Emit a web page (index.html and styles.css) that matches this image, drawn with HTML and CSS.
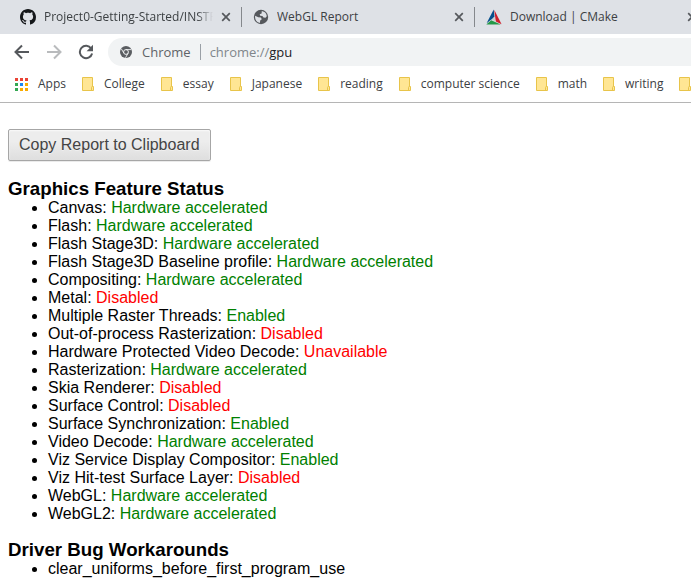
FILE: index.html
```html
<!DOCTYPE html>
<html lang="en">
<head>
<meta charset="utf-8">
<title>chrome://gpu</title>
<link rel="stylesheet" href="styles.css">
</head>
<body>
<svg class="defs" aria-hidden="true">
  <symbol id="close" viewBox="0 0 10 10"><path d="M1.2 1.2l7.6 7.6M8.8 1.2L1.2 8.8" fill="none" stroke="#55585c" stroke-width="1.7"/></symbol>
  <symbol id="folder" viewBox="0 0 12 14"><path d="M.5.5h10v9h1v4H.5z" fill="#ffe694" stroke="#e8c44a"/><path d="M9.5 13V10.5q0-1 1-1" fill="none" stroke="#e8c44a"/></symbol>
</svg>
<header class="browser">
  <div class="tabs">
    <div class="tab">
      <svg class="favicon" viewBox="0 0 16 16"><path fill="#15171a" fill-rule="evenodd" d="M8 0C3.58 0 0 3.58 0 8c0 3.54 2.29 6.53 5.47 7.59.4.07.55-.17.55-.38 0-.19-.01-.82-.01-1.49-2.01.37-2.53-.49-2.69-.94-.09-.23-.48-.94-.82-1.13-.28-.15-.68-.52-.01-.53.63-.01 1.08.58 1.23.82.72 1.21 1.87.87 2.33.66.07-.52.28-.87.51-1.07-1.78-.2-3.64-.89-3.64-3.95 0-.87.31-1.59.82-2.15-.08-.2-.36-1.02.08-2.12 0 0 .67-.21 2.2.82.64-.18 1.32-.27 2-.27s1.36.09 2 .27c1.53-1.04 2.2-.82 2.2-.82.44 1.1.16 1.92.08 2.12.51.56.82 1.27.82 2.15 0 3.07-1.87 3.75-3.65 3.95.29.25.54.73.54 1.48 0 1.07-.01 1.93-.01 2.2 0 .21.15.46.55.38A8.01 8.01 0 0 0 16 8c0-4.42-3.58-8-8-8z"/></svg>
      <span class="tab-title fade">Project0-Getting-Started/INSTRU</span>
      <button class="close" aria-label="Close tab"><svg viewBox="0 0 10 10"><use href="#close"/></svg></button>
    </div>
    <div class="tab">
      <svg class="favicon" viewBox="0 0 16 16"><circle cx="8" cy="8" r="7.2" fill="#55585c"/><path fill="#dee1e6" d="M8.8 2.1l2.6.9c1.4.9 2.2 2.4 2.4 4.2l-1.3 1.6-2-.2-1.1-1.5-2.2-.3-.5-1.5 1.9-.8zM2.1 6.8l3.2 1.4 2.6.4.9 1.6-1.6 1.4-.3 2.3c-2.9-.3-5.2-3.2-4.8-7.1z"/></svg>
      <span class="tab-title">WebGL Report</span>
      <button class="close" aria-label="Close tab"><svg viewBox="0 0 10 10"><use href="#close"/></svg></button>
    </div>
    <div class="tab">
      <svg class="favicon" viewBox="0 0 16 16"><path fill="#064f8c" d="M7.7.5L.6 14.2 8.5 8z"/><path fill="#cf1f2d" d="M8.2.8l7.4 14.4-5.8-2.6z"/><path fill="#249847" d="M.3 15.500l4.900-4.200 9.500 4.200z"/><path fill="#cdcdce" d="M8.3 7.500l1.200 4.700-3.700-1.500z"/></svg>
      <span class="tab-title">Download | CMake</span>
      <button class="close" aria-label="Close tab"><svg viewBox="0 0 10 10"><use href="#close"/></svg></button>
    </div>
  </div>
  <div class="toolbar">
    <button class="nav" aria-label="Back"><svg viewBox="0 0 16 16"><path d="M15 8H2M8 1.5L1.5 8 8 14.5" fill="none" stroke="#55585c" stroke-width="2"/></svg></button>
    <button class="nav" aria-label="Forward"><svg viewBox="0 0 16 16"><path d="M1 8h13M8 1.5L14.5 8 8 14.5" fill="none" stroke="#b9bbbd" stroke-width="2"/></svg></button>
    <button class="nav" aria-label="Reload"><svg viewBox="0 0 16 16"><path d="M13.2 4.5A6.2 6.2 0 1 0 14.1 9.5" fill="none" stroke="#55585c" stroke-width="2"/><path d="M15 .8v6.400H8.600z" fill="#55585c"/></svg></button>
    <div class="omnibox">
      <svg class="site" viewBox="0 0 12 12"><circle cx="6" cy="6" r="6" fill="#5a5d61"/><circle cx="6" cy="6" r="2.4" fill="none" stroke="#f1f3f4"/><path d="M6 3.6h5.200M3.900 7.200L1.300 2.800M8.100 7.200l-2.600 4.500" fill="none" stroke="#f1f3f4" stroke-width=".9"/></svg>
      <span class="origin">Chrome</span>
      <span class="url">chrome://<b>gpu</b></span>
    </div>
  </div>
  <nav class="bookmarks">
    <a href="#" class="apps"><svg viewBox="0 0 13 13"><path fill="#ea4335" d="M0 0h3v3H0zM5 0h3v3H5zM10 0h3v3h-3z"/><path fill="#34a853" d="M0 5h3v3H0zM0 10h3v3H0z"/><path fill="#1a87f5" d="M5 5h3v3H5z"/><path fill="#f9ab00" d="M10 5h3v3h-3zM5 10h3v3H5zM10 10h3v3h-3z"/></svg>Apps</a>
    <a href="#"><svg viewBox="0 0 12 14"><use href="#folder"/></svg>College</a>
    <a href="#"><svg viewBox="0 0 12 14"><use href="#folder"/></svg>essay</a>
    <a href="#"><svg viewBox="0 0 12 14"><use href="#folder"/></svg>Japanese</a>
    <a href="#"><svg viewBox="0 0 12 14"><use href="#folder"/></svg>reading</a>
    <a href="#"><svg viewBox="0 0 12 14"><use href="#folder"/></svg>computer science</a>
    <a href="#"><svg viewBox="0 0 12 14"><use href="#folder"/></svg>math</a>
    <a href="#"><svg viewBox="0 0 12 14"><use href="#folder"/></svg>writing</a>
    <a href="#" aria-label="More bookmarks"><svg viewBox="0 0 12 14"><use href="#folder"/></svg></a>
  </nav>
</header>
<main>
  <button class="copy">Copy Report to Clipboard</button>
  <h3>Graphics Feature Status</h3>
  <ul>
    <li>Canvas: <span class="ok">Hardware accelerated</span></li>
    <li>Flash: <span class="ok">Hardware accelerated</span></li>
    <li>Flash Stage3D: <span class="ok">Hardware accelerated</span></li>
    <li>Flash Stage3D Baseline profile: <span class="ok">Hardware accelerated</span></li>
    <li>Compositing: <span class="ok">Hardware accelerated</span></li>
    <li>Metal: <span class="off">Disabled</span></li>
    <li>Multiple Raster Threads: <span class="ok">Enabled</span></li>
    <li>Out-of-process Rasterization: <span class="off">Disabled</span></li>
    <li>Hardware Protected Video Decode: <span class="off">Unavailable</span></li>
    <li>Rasterization: <span class="ok">Hardware accelerated</span></li>
    <li>Skia Renderer: <span class="off">Disabled</span></li>
    <li>Surface Control: <span class="off">Disabled</span></li>
    <li>Surface Synchronization: <span class="ok">Enabled</span></li>
    <li>Video Decode: <span class="ok">Hardware accelerated</span></li>
    <li>Viz Service Display Compositor: <span class="ok">Enabled</span></li>
    <li>Viz Hit-test Surface Layer: <span class="off">Disabled</span></li>
    <li>WebGL: <span class="ok">Hardware accelerated</span></li>
    <li>WebGL2: <span class="ok">Hardware accelerated</span></li>
  </ul>
  <h3>Driver Bug Workarounds</h3>
  <ul>
    <li>clear_uniforms_before_first_program_use</li>
  </ul>
</main>
</body>
</html>
```
FILE: styles.css
```css
* { box-sizing: border-box; }
body {
  margin: 0;
  background: #fff;
  color: #000;
  font: 16px/18px "Liberation Sans", Arial, sans-serif;
}
svg { display: block; flex: none; }
.defs { position: absolute; width: 0; height: 0; }
.browser {
  font: 12px/16px "Open Sans", "Segoe UI", sans-serif;
  color: #3c4043;
  border-bottom: 1px solid #b5b5b5;
  overflow: hidden;
}
.browser button { border: 0; padding: 0; background: none; }

.tabs { display: flex; height: 34px; background: #dee1e6; }
.tab {
  display: flex;
  flex: none;
  align-items: center;
  width: 233px;
  padding: 0 10px 0 12px;
  position: relative;
}
.tab:first-child { width: 241px; padding-left: 20px; }
.tab + .tab::before {
  content: "";
  position: absolute;
  left: 0;
  top: 7px;
  width: 1px;
  height: 20px;
  background: #85888c;
}
.favicon { width: 16px; height: 16px; margin-right: 8px; }
.tab-title { flex: 1; min-width: 0; overflow: hidden; white-space: nowrap; }
.fade {
  -webkit-mask-image: linear-gradient(to left, transparent, #000 16px);
  mask-image: linear-gradient(to left, transparent, #000 16px);
}
.close { margin-left: 8px; }
.close svg { width: 10px; height: 10px; }

.toolbar { display: flex; align-items: center; gap: 16px; height: 36px; padding-left: 14px; }
.nav { flex: none; }
.nav svg { width: 16px; height: 16px; }
.omnibox {
  display: flex;
  flex: 1;
  align-items: center;
  height: 28px;
  margin-left: -2px;
  padding-left: 12px;
  border-radius: 14px 0 0 14px;
  background: #f1f3f4;
  font-size: 13px;
  color: #5f6368;
}
.site { width: 12px; height: 12px; margin-right: 10px; }
.origin { padding-right: 9px; margin-right: 9px; border-right: 1px solid #9aa0a6; }
.url { color: #80868b; }
.url b { font-weight: 400; color: #202124; }

.bookmarks { display: flex; gap: 16px; height: 32px; padding-left: 15px; padding-bottom: 4px; }
.bookmarks a {
  display: flex;
  flex: none;
  align-items: center;
  gap: 10px;
  color: inherit;
  text-decoration: none;
}
.bookmarks svg { width: 12px; height: 14px; }
.bookmarks .apps svg { width: 13px; height: 13px; }

main { padding: 26px 8px 0; }
.copy {
  display: block;
  height: 32px;
  margin: 0 0 17px;
  padding: 0 10px;
  border: 1px solid #a6a6a6;
  border-radius: 2px;
  background: linear-gradient(#ededed, #ededed 38%, #dedede);
  box-shadow: 0 1px 0 rgba(0, 0, 0, .08), inset 0 1px 2px rgba(255, 255, 255, .75);
  color: #444;
  font: inherit;
  text-shadow: 0 1px 0 #f0f0f0;
}
h3 { margin: 16px 0 0; line-height: 21px; }
ul { margin: 0; padding-left: 40px; }
.ok { color: green; }
.off { color: red; }
```
